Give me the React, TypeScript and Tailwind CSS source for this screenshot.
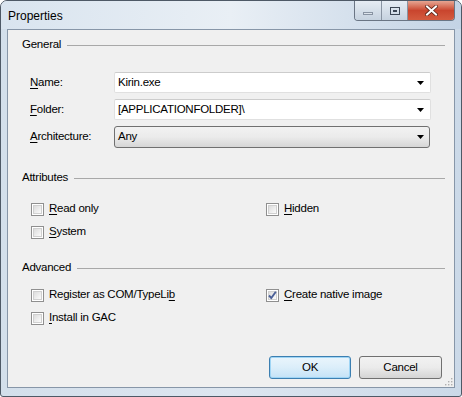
import React from "react";

const font = { fontFamily: '"Segoe UI", "Liberation Sans", Arial, sans-serif' };

function Key({ children }: { children: React.ReactNode }) {
  return <span className="underline underline-offset-2 decoration-1">{children}</span>;
}

function GroupLabel({ text }: { text: string }) {
  return (
    <div className="flex items-center h-[16px] pl-[14px] pr-[9px]">
      <span className="text-black">{text}</span>
      <div className="flex-1 ml-[6px] border-t border-[#a8a8a8]" />
    </div>
  );
}

function Arrow() {
  return (
    <svg width="7" height="4" viewBox="0 0 7 4" className="shrink-0">
      <path d="M0 0 H7 L3.5 4 Z" fill="#000" />
    </svg>
  );
}

function Combo({ value }: { value: string }) {
  return (
    <div className="w-[317px] h-[21px] flex items-center justify-between pl-[3px] pr-[6px] bg-white border border-[#e0e0e0] border-t-[#cccccc] rounded-[2px]">
      <span>{value}</span>
      <Arrow />
    </div>
  );
}

function Check({ checked, children }: { checked?: boolean; children: React.ReactNode }) {
  return (
    <div className="flex items-center h-[16px] gap-[5px]">
      <div className="w-[13px] h-[13px] border border-[#8f8f8f] bg-white p-[1px] relative">
        <div className="w-full h-full border border-[#d0d0d0] bg-gradient-to-br from-[#dcdcdc] to-[#fbfbfb]" />
        {checked && (
          <svg width="11" height="11" viewBox="0 0 11 11" className="absolute left-0 top-0">
            <path d="M2 5.5 L4.3 8 L8.8 1.8" fill="none" stroke="#4a5f97" strokeWidth="1.9" />
          </svg>
        )}
      </div>
      <span>{children}</span>
    </div>
  );
}

export default function App() {
  return (
    <div
      style={font}
      className="w-[462px] h-[397px] flex flex-col rounded-t-[7px] rounded-b-[3px] border border-[#4e5966] bg-gradient-to-r from-[#d3dfeb] via-[#dde6f0] to-[#cbd9e8] text-[12px] text-black overflow-hidden"
    >
      {/* title bar */}
      <div className="h-[28px] flex justify-between bg-gradient-to-r from-[#d9e4ef] via-[#e9eff5] to-[#c3d3e5]">
        <div className="pl-[7px] pt-[6px] text-[12px] text-black">Properties</div>
        <div className="flex h-[20px] mr-[6px] border border-t-0 border-[#6a7584] rounded-b-[4px] overflow-hidden">
          <div className="w-[27px] flex items-center justify-center border-r border-[#8994a2] bg-gradient-to-b from-[#e6edf4] to-[#c6d2df]">
            <div className="w-[10px] h-[3px] mt-[6px] border border-[#8893a2] bg-[#dde4ec]" />
          </div>
          <div className="w-[26px] flex items-center justify-center border-r border-[#8994a2] bg-gradient-to-b from-[#e6edf4] to-[#c6d2df]">
            <div className="w-[10px] h-[8px] border border-[#3c4654] flex items-center justify-center">
              <div className="w-[4px] h-[2px] border border-[#3c4654]" />
            </div>
          </div>
          <div className="w-[46px] flex items-center justify-center bg-gradient-to-b from-[#e5a592] via-[#c9452e] to-[#d45b3f]">
            <svg width="13" height="11" viewBox="0 0 13 11">
              <path d="M2 1.5 L11 9.5 M11 1.5 L2 9.5" stroke="#5a2418" strokeWidth="3.6" strokeLinecap="square" />
              <path d="M2 1.5 L11 9.5 M11 1.5 L2 9.5" stroke="#ffffff" strokeWidth="2" strokeLinecap="square" />
            </svg>
          </div>
        </div>
      </div>

      {/* client area */}
      <div className="flex-1 mx-[6px] mb-[8px] border border-[#8796a8] bg-[#f0f0f0] flex flex-col relative text-[11.5px] tracking-[-0.25px]">
        <div className="pt-[7px]">
          <GroupLabel text="General" />
        </div>

        <div className="mt-[19px] flex flex-col gap-[6px]">
          <div className="flex items-center">
            <span className="w-[106px] pl-[22px]">
              <Key>N</Key>ame:
            </span>
            <Combo value="Kirin.exe" />
          </div>
          <div className="flex items-center">
            <span className="w-[106px] pl-[22px]">
              <Key>F</Key>older:
            </span>
            <Combo value="[APPLICATIONFOLDER]\" />
          </div>
          <div className="flex items-center">
            <span className="w-[106px] pl-[22px]">
              <Key>A</Key>rchitecture:
            </span>
            <div className="w-[316px] h-[22px] flex items-center justify-between pl-[3px] pr-[5px] border border-[#707070] rounded-[3px] bg-gradient-to-b from-[#f2f2f2] via-[#ebebeb] to-[#d6d6d6]">
              <span>Any</span>
              <Arrow />
            </div>
          </div>
        </div>

        <div className="mt-[22px]">
          <GroupLabel text="Attributes" />
        </div>
        <div className="mt-[15px] grid grid-cols-[235px_1fr] pl-[23px] gap-y-[7px]">
          <Check>
            <Key>R</Key>ead only
          </Check>
          <Check>
            <Key>H</Key>idden
          </Check>
          <Check>
            <Key>S</Key>ystem
          </Check>
        </div>

        <div className="mt-[20px]">
          <GroupLabel text="Advanced" />
        </div>
        <div className="mt-[11px] grid grid-cols-[235px_1fr] pl-[23px] gap-y-[7px]">
          <Check>
            Register as COM/TypeLi<Key>b</Key>
          </Check>
          <Check checked>
            <Key>C</Key>reate native image
          </Check>
          <Check>
            <Key>I</Key>nstall in GAC
          </Check>
        </div>

        <div className="mt-auto mb-[8px] flex justify-end gap-[8px] pr-[12px]">
          <div className="w-[82px] h-[23px] flex items-center justify-center border border-[#3c7fb1] rounded-[3px] bg-gradient-to-b from-[#eaf5fc] via-[#dbeefa] to-[#c4e2f6] shadow-[inset_0_0_0_1px_#9fd5f5]">
            OK
          </div>
          <div className="w-[83px] h-[23px] flex items-center justify-center border border-[#707070] rounded-[3px] bg-gradient-to-b from-[#f2f2f2] via-[#ebebeb] to-[#d4d4d4]">
            Cancel
          </div>
        </div>

        {/* size grip */}
        <svg width="8" height="8" viewBox="0 0 8 8" className="absolute right-[1px] bottom-[1px]">
          <rect x="6" y="0" width="1.4" height="1.4" fill="#b0b0b0" />
          <rect x="3" y="3" width="1.4" height="1.4" fill="#b0b0b0" />
          <rect x="6" y="3" width="1.4" height="1.4" fill="#b0b0b0" />
          <rect x="0" y="6" width="1.4" height="1.4" fill="#b0b0b0" />
          <rect x="3" y="6" width="1.4" height="1.4" fill="#b0b0b0" />
          <rect x="6" y="6" width="1.4" height="1.4" fill="#b0b0b0" />
        </svg>
      </div>
    </div>
  );
}
